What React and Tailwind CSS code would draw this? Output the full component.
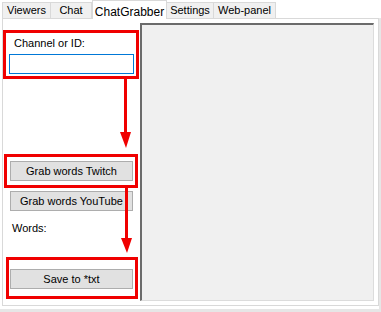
import React from 'react'

const font = { fontFamily: '"Liberation Sans", Arial, sans-serif' }

function Tab({ label, active, width }) {
  if (active) {
    return (
      <div
        className="h-[19px] -mb-px bg-white border border-b-0 border-[#d9d9d9] flex items-start justify-center pt-[2px] text-[12px] text-black z-10"
        style={{ width }}
      >
        {label}
      </div>
    )
  }
  return (
    <div
      className="h-[16px] bg-[#f0f0f0] border border-b-0 border-[#d9d9d9] -ml-px flex items-center justify-center text-[11px] text-black"
      style={{ width }}
    >
      {label}
    </div>
  )
}

function WinButton({ children }) {
  return (
    <button className="w-[123px] h-[20px] bg-[#e1e1e1] border border-[#adadad] text-[11px] text-black leading-none flex items-center justify-center">
      {children}
    </button>
  )
}

export default function App() {
  return (
    <div className="w-[381px] h-[312px] bg-white relative overflow-hidden" style={font}>
      {/* tab strip */}
      <div className="flex items-end h-[18px] pl-[3px]">
        <Tab label="Viewers" width={49} />
        <Tab label="Chat" width={42} />
        <Tab label="ChatGrabber" width={75} active />
        <Tab label="Settings" width={48} />
        <Tab label="Web-panel" width={63} />
      </div>

      {/* tab page */}
      <div className="ml-[2px] w-[377px] h-[288px] border border-[#d9d9d9] bg-white flex">
        {/* left column */}
        <div className="w-[137px] flex flex-col">
          <div className="mt-[11px] w-[136px] h-[49px] border-[3px] border-[#f00000] flex flex-col">
            <div className="text-[11px] text-black ml-[8px] mt-[4px] leading-[13px]">Channel or ID:</div>
            <div className="ml-[3px] mt-[4px] w-[125px] h-[20px] border border-[#0078d7] bg-white" />
          </div>

          <div className="mt-[75px] ml-px w-[134px] h-[34px] border-[3px] border-[#f00000] flex items-center pl-[3px]">
            <WinButton>Grab words Twitch</WinButton>
          </div>

          <div className="mt-[3px] ml-[7px]">
            <WinButton>Grab words YouTube</WinButton>
          </div>

          <div className="mt-[10px] ml-[9px] text-[11px] text-black leading-[14px]">Words:</div>

          <div className="mt-[22px] ml-[3px] w-[132px] h-[42px] border-[3px] border-[#f00000] flex items-center pl-px pt-[2px]">
            <WinButton>Save to *txt</WinButton>
          </div>
        </div>

        {/* list box */}
        <div className="mt-[4px] w-[234px] h-[278px] bg-[#f0f0f0] border-t-2 border-l-2 border-[#6b6b6b] border-r border-b border-r-[#dcdcdc] border-b-[#dcdcdc]" />
      </div>

      <div className="absolute right-0 top-[18px] w-[2px] h-[294px] bg-[#e6e6e6]" />
      <div className="absolute left-0 bottom-0 w-[381px] h-[3px] bg-[#e6e6e6]" />

      {/* annotation arrows */}
      <svg className="absolute left-0 top-0 pointer-events-none" width="381" height="312">
        <line x1="125.5" y1="79" x2="125.5" y2="134" stroke="#f00000" strokeWidth="3" />
        <polygon points="120,132 131,132 126,148" fill="#f00000" />
        <line x1="126.5" y1="187" x2="126.5" y2="240" stroke="#f00000" strokeWidth="3" />
        <polygon points="121,238 132,238 127,253" fill="#f00000" />
      </svg>
    </div>
  )
}
